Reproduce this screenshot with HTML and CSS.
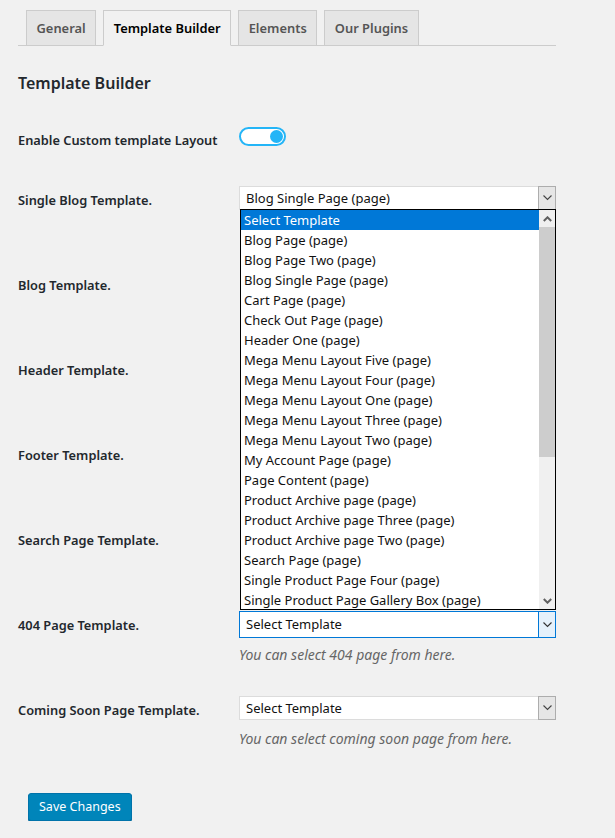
FILE: index.html
```html
<!DOCTYPE html>
<html>
<head>
<meta charset="utf-8">
<link rel="stylesheet" href="styles.css">
</head>
<body>
<div class="wrap">
  <nav class="tabs">
    <span class="tab">General</span>
    <span class="tab active">Template Builder</span>
    <span class="tab">Elements</span>
    <span class="tab">Our Plugins</span>
  </nav>

  <h2 class="title">Template Builder</h2>

  <div class="row row-toggle">
    <div class="label">Enable Custom template Layout</div>
    <div class="field"><span class="toggle"><span class="knob"></span></span></div>
  </div>

  <div class="row">
    <div class="label">Single Blog Template.</div>
    <div class="field">
      <div class="select-wrap">
        <div class="select"><span class="value">Blog Single Page (page)</span><span class="arrow"><svg width="9" height="6" viewBox="0 0 9 6"><path d="M0.5 0.5 L4.5 4.5 L8.5 0.5" fill="none" stroke="#444" stroke-width="1.1"/></svg></span></div>
        <div class="listbox">
          <ul class="options">
            <li class="sel">Select Template</li>
            <li>Blog Page (page)</li>
            <li>Blog Page Two (page)</li>
            <li>Blog Single Page (page)</li>
            <li>Cart Page (page)</li>
            <li>Check Out Page (page)</li>
            <li>Header One (page)</li>
            <li>Mega Menu Layout Five (page)</li>
            <li>Mega Menu Layout Four (page)</li>
            <li>Mega Menu Layout One (page)</li>
            <li>Mega Menu Layout Three (page)</li>
            <li>Mega Menu Layout Two (page)</li>
            <li>My Account Page (page)</li>
            <li>Page Content (page)</li>
            <li>Product Archive page (page)</li>
            <li>Product Archive page Three (page)</li>
            <li>Product Archive page Two (page)</li>
            <li>Search Page (page)</li>
            <li>Single Product Page Four (page)</li>
            <li>Single Product Page Gallery Box (page)</li>
          </ul>
          <div class="scrollbar">
            <span class="sb-btn"><svg width="9" height="6" viewBox="0 0 9 6"><path d="M0.8 5 L4.5 1.3 L8.2 5" fill="none" stroke="#606060" stroke-width="2"/></svg></span>
            <span class="sb-track"><span class="sb-thumb"></span></span>
            <span class="sb-btn"><svg width="9" height="6" viewBox="0 0 9 6"><path d="M0.8 1 L4.5 4.7 L8.2 1" fill="none" stroke="#606060" stroke-width="2"/></svg></span>
          </div>
        </div>
      </div>
    </div>
  </div>

  <div class="row">
    <div class="label">Blog Template.</div>
    <div class="field"></div>
  </div>

  <div class="row">
    <div class="label">Header Template.</div>
    <div class="field"></div>
  </div>

  <div class="row">
    <div class="label">Footer Template.</div>
    <div class="field"></div>
  </div>

  <div class="row">
    <div class="label">Search Page Template.</div>
    <div class="field"></div>
  </div>

  <div class="row">
    <div class="label">404 Page Template.</div>
    <div class="field">
      <div class="select focus"><span class="value">Select Template</span><span class="arrow"><svg width="9" height="6" viewBox="0 0 9 6"><path d="M0.5 0.5 L4.5 4.5 L8.5 0.5" fill="none" stroke="#333" stroke-width="1.1"/></svg></span></div>
      <p class="desc">You can select 404 page from here.</p>
    </div>
  </div>

  <div class="row">
    <div class="label">Coming Soon Page Template.</div>
    <div class="field">
      <div class="select"><span class="value">Select Template</span><span class="arrow"><svg width="9" height="6" viewBox="0 0 9 6"><path d="M0.5 0.5 L4.5 4.5 L8.5 0.5" fill="none" stroke="#444" stroke-width="1.1"/></svg></span></div>
      <p class="desc">You can select coming soon page from here.</p>
    </div>
  </div>

  <div class="submit">
    <button class="button-primary" type="button">Save Changes</button>
  </div>
</div>
</body>
</html>
```

FILE: styles.css
```css
html, body {
  margin: 0;
  padding: 0;
  background: #f1f1f1;
}
body {
  font-family: "Noto Sans", "Open Sans", sans-serif;
  color: #23282d;
  font-size: 13px;
}
.wrap {
  padding-left: 18px;
  width: 538px;
}
.tabs {
  display: flex;
  gap: 7px;
  padding: 10px 0 0 8px;
  border-bottom: 1px solid #ccc;
  height: 35px;
}
.tab {
  display: flex;
  align-items: center;
  box-sizing: border-box;
  height: 36px;
  margin-bottom: -1px;
  padding: 0 9.5px;
  background: #e5e5e5;
  border: 1px solid #ccc;
  font-size: 12.9px;
  font-weight: 600;
  color: #555;
}
.tab.active {
  background: #f1f1f1;
  border-bottom-color: #f1f1f1;
  color: #000;
}
.title {
  margin: 25px 0 0;
  font-size: 16px;
  line-height: 24px;
  font-weight: 600;
  color: #23282d;
}
.row {
  display: grid;
  grid-template-columns: 221px 317px;
  height: 85px;
}
.row-toggle {
  height: 52px;
  margin-top: 24px;
}
.label {
  padding-top: 19px;
  line-height: 20px;
  font-size: 12.8px;
  font-weight: 600;
  color: #23282d;
}
.row-toggle .label {
  padding-top: 11px;
}
.row-toggle .field {
  padding-top: 8px;
}
.field {
  padding-top: 15px;
}
.toggle {
  display: flex;
  justify-content: flex-end;
  align-items: center;
  box-sizing: border-box;
  width: 47px;
  height: 19px;
  border: 2.5px solid #24b5f7;
  border-radius: 10px;
  background: #fff;
  padding-right: 1px;
}
.knob {
  width: 13px;
  height: 13px;
  border-radius: 50%;
  background: #24b5f7;
}
.select-wrap {
  position: relative;
}
.select {
  display: flex;
  box-sizing: border-box;
  height: 24px;
  background: #fff;
  border: 1px solid #dcdcdc;
  border-right: none;
}
.select .value {
  flex: 1;
  padding-left: 6px;
  line-height: 22px;
  font-size: 13px;
  color: #111;
}
.select .arrow {
  display: flex;
  align-items: center;
  justify-content: center;
  width: 16px;
  margin-top: -1px;
  margin-bottom: -1px;
  background: #e6e6e6;
  border: 1px solid #adadad;
}
.select.focus {
  height: 27px;
  border: 1px solid #0078d7;
  margin-bottom: -2px;
}
.select.focus .value {
  line-height: 25px;
}
.select.focus .arrow {
  background: #e5f1fb;
  border: 1px solid #0078d7;
  margin: -1px -1px -1px 0;
}
.desc {
  margin: 9px 0 0;
  line-height: 20px;
  font-size: 14px;
  font-style: italic;
  color: #666;
}
.listbox {
  position: absolute;
  top: 23px;
  left: 1px;
  width: 316px;
  height: 401px;
  box-sizing: border-box;
  border: 1px solid #000;
  background: #fff;
  display: flex;
  z-index: 5;
}
.options {
  list-style: none;
  margin: 0;
  padding: 0;
  flex: 1;
}
.options li {
  height: 20px;
  line-height: 20px;
  padding-left: 3px;
  font-size: 13px;
  color: #111;
  white-space: nowrap;
}
.options li.sel {
  background: #0078d7;
  color: #fff;
}
.scrollbar {
  width: 16px;
  display: flex;
  flex-direction: column;
  background: #f0f0f0;
}
.sb-btn {
  height: 17px;
  display: flex;
  align-items: center;
  justify-content: center;
}
.sb-track {
  flex: 1;
  display: flex;
  flex-direction: column;
}
.sb-thumb {
  height: 230px;
  background: #cdcdcd;
}
.submit {
  padding: 27px 0 0 10px;
}
.button-primary {
  height: 28px;
  padding: 0 10px;
  background: #0085ba;
  border: 1px solid #0073aa;
  border-radius: 3px;
  box-shadow: 0 1px 0 #006799;
  color: #fff;
  font-family: "Noto Sans", "Open Sans", sans-serif;
  font-size: 12.5px;
  line-height: 26px;
}
```
